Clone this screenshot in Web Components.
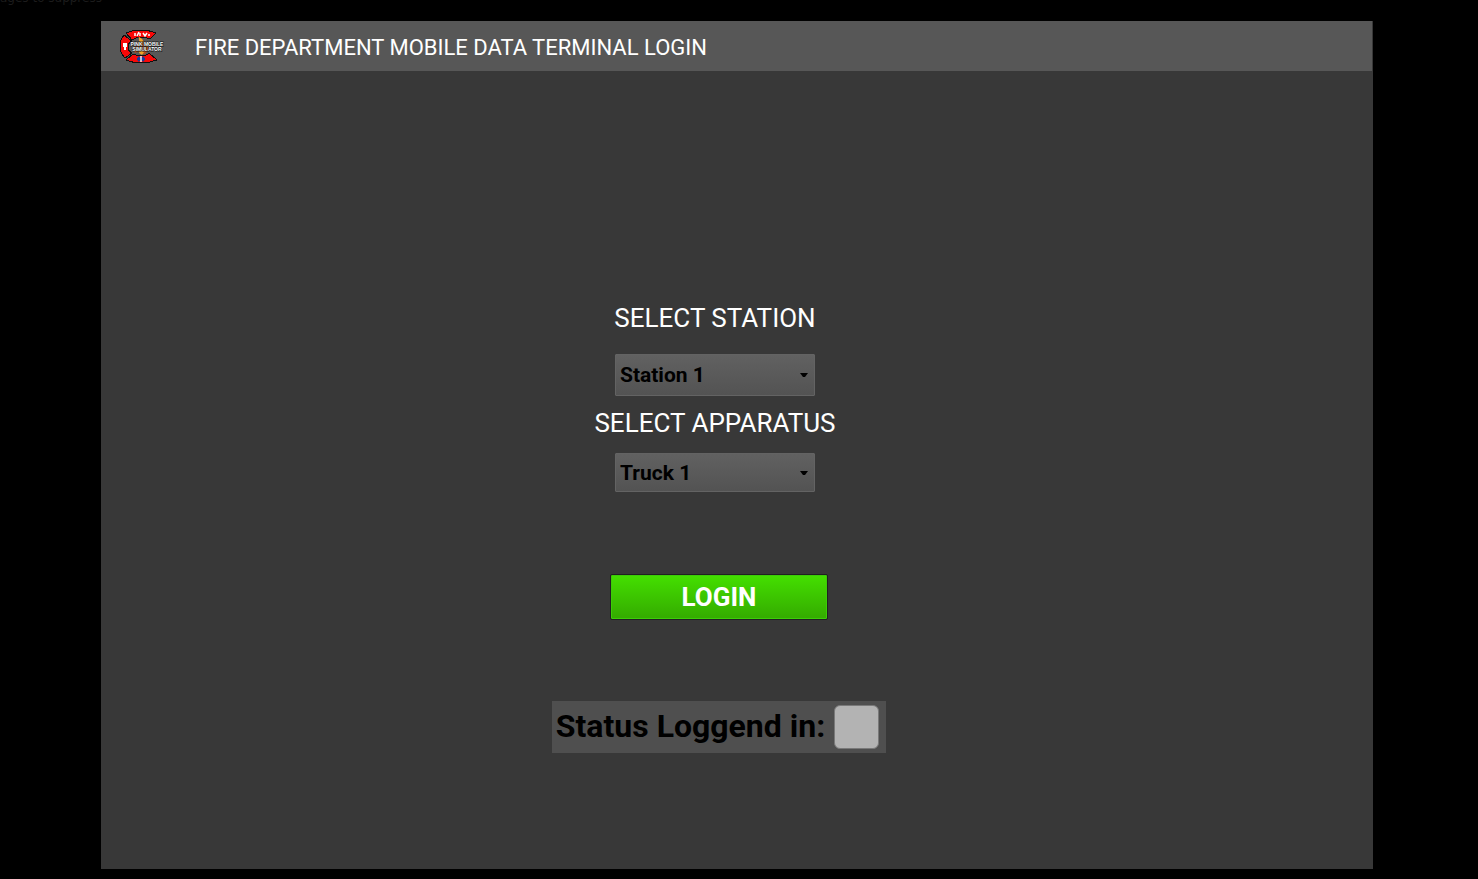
<!DOCTYPE html>
<html lang="en">
<head>
<meta charset="utf-8">
<title>Fire Department Mobile Data Terminal</title>
<style>
html, body { margin: 0; background: #000; }
body { font-family: Roboto, sans-serif; color: #fff; }
</style>
</head>
<body>
<mdt-app></mdt-app>

<script>
const define = (name, html, setup) => {
  const template = document.createElement('template');
  template.innerHTML = html;
  customElements.define(name, class extends HTMLElement {
    constructor() {
      super();
      this.attachShadow({ mode: 'open' }).append(template.content.cloneNode(true));
    }
    connectedCallback() { if (setup) setup(this, this.shadowRoot); }
  });
};

define('mdt-logo', `
<style>
:host { display: block; width: 46px; height: 34px; }
svg { display: block; overflow: visible; }
text { font: 700 5px "Liberation Sans", sans-serif; fill: #fff; stroke: #111; stroke-width: 1px; paint-order: stroke; text-anchor: middle; }
</style>
<svg width="46" height="34" viewBox="0 0 46 34" role="img" aria-label="Logo">
  <g fill="#f80808" stroke="#111" stroke-width="1" shape-rendering="crispEdges">
    <path d="M7 4Q14 1 22 1Q30 1 37 4L31 10Q26 8 22 8Q17 8 13 11Z"/>
    <path d="M5 6L13 12Q9 14 9 18Q9 22 13 24L6 29Q1 24 1 17Q1 11 5 6Z"/>
    <path d="M14 25Q18 27 22 27Q27 27 30 24L38 31Q30 34 22 34Q14 34 7 31Z"/>
  </g>
  <path d="M16 24Q12 18 18 15Q22 12 19 8Q27 11 24 15Q32 16 28 23L25 26Q22 21 16 24Z" fill="#b04d1c"/>
  <path d="M20 8Q25 10 24 14L20 12ZM21 20L25 23L23 26L20 24Z" fill="#f0a326"/>
  <path d="M16 7V4M18 7L20 3M21 4V7M24 4L26 7L28 4M29 6H31" fill="none" stroke="#fff" stroke-width="1.5"/>
  <path d="M4 14H8V18H7V21H5V18H4Z" fill="#fff"/>
  <path d="M19 28L25 32M19 32L25 28M18 30H26" stroke="#173b9c" stroke-width="2"/>
  <path d="M22 27V33" stroke="#fff" stroke-width="1.4"/>
  <text x="28" y="17">PINK MOBILE</text>
  <text x="28" y="22">SIMULATOR</text>
</svg>`);

define('mdt-header', `
<style>
:host { display: flex; align-items: center; gap: 30px; height: 50px; padding-left: 18px; margin-right: 1px; background: #575757; }
h1 { margin: 0; padding-top: 3px; font-size: 22px; line-height: 26px; font-weight: 400; }
</style>
<mdt-logo></mdt-logo><h1><slot></slot></h1>`);

define('mdt-field', `
<style>
:host { display: flex; flex-direction: column; align-items: center; }
label { font-size: 26px; line-height: 32px; margin-bottom: var(--label-gap, 20px); }
.box { position: relative; width: 200px; height: var(--box-height, 42px); }
select { appearance: none; box-sizing: border-box; width: 100%; height: 100%; margin: 0; padding: 0 20px 0 4px; border: 1px solid #636363; border-radius: 1px; background: linear-gradient(#616161, #535353); color: #000; font: 700 21px Roboto, sans-serif; }
svg { position: absolute; right: 7px; top: 50%; margin-top: -2px; pointer-events: none; }
</style>
<label for="choice"></label>
<div class="box"><select id="choice"><option></option></select>
<svg width="8" height="4" viewBox="0 0 8 4" aria-hidden="true"><path d="M0 0H8L5 4H3Z" fill="#000"/></svg></div>`,
(host, root) => {
  root.querySelector('label').textContent = host.getAttribute('label');
  root.querySelector('option').textContent = host.getAttribute('value');
});

define('mdt-login-button', `
<style>
:host { display: block; }
button { display: block; box-sizing: border-box; width: 218px; height: 46px; padding: 0; border: 1px solid #202020; border-radius: 2px; background: linear-gradient(#44e000, #34aa00); box-shadow: inset 0 0 0 1px #3ccc08; color: #fff; font: 700 26px Roboto, sans-serif; }
</style>
<button type="button"><slot></slot></button>`);

define('mdt-status', `
<style>
:host { display: flex; align-items: center; box-sizing: border-box; gap: 9px; height: 52px; padding: 0 7px 0 4px; background: #4f4f4f; color: #000; }
label { font-size: 32px; line-height: 38px; padding-bottom: 2px; font-weight: 700; white-space: nowrap; }
input { appearance: none; box-sizing: border-box; width: 45px; height: 44px; margin: 0; border: 1px solid #797979; border-radius: 6px; background: #b3b3b3; }
</style>
<label for="state"><slot></slot></label><input id="state" type="checkbox">`);

define('mdt-app', `
<style>
:host { display: flex; box-sizing: border-box; min-height: 100vh; padding: 21px 105px 10px 101px; position: relative; }
.trace { position: absolute; top: -10px; left: 0; font: 12px/16px "DejaVu Sans", sans-serif; color: #1c1c1c; white-space: nowrap; }
main { flex: 1; display: flex; flex-direction: column; background: #383838; }
form { display: flex; flex-direction: column; align-items: center; padding: 231px 36px 0 0; }
.fields { display: flex; flex-direction: column; gap: 11px; padding-right: 8px; }
.second { --label-gap: 14px; --box-height: 39px; }
mdt-login-button { margin-top: 82px; }
mdt-status { margin-top: 81px; }
</style>
<span class="trace">ages to suppress</span>
<main>
  <mdt-header>FIRE DEPARTMENT MOBILE DATA TERMINAL LOGIN</mdt-header>
  <form>
    <div class="fields">
      <mdt-field label="SELECT STATION" value="Station 1"></mdt-field>
      <mdt-field class="second" label="SELECT APPARATUS" value="Truck 1"></mdt-field>
    </div>
    <mdt-login-button>LOGIN</mdt-login-button>
    <mdt-status>Status Loggend in:</mdt-status>
  </form>
</main>`);
</script>
</body>
</html>
